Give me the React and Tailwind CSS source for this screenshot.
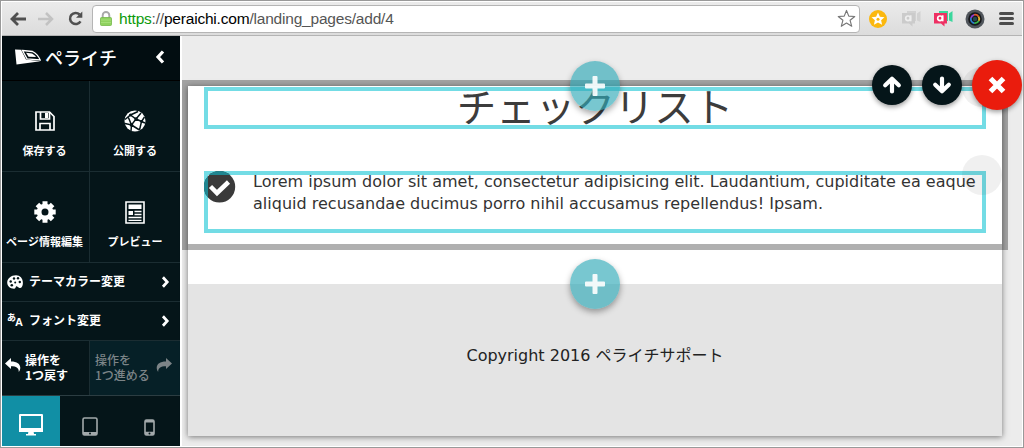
import clsx from 'clsx';

const line = { fill: 'none', stroke: 'currentColor', strokeLinecap: 'round', strokeLinejoin: 'round' };

function ArrowIcon({ className }) {
  return (
    <svg viewBox="0 0 20 20" className={className} {...line} strokeWidth="4.2">
      <path d="M10 16.500V4.500M3.200 10.200 10 3.800l6.800 6.400" />
    </svg>
  );
}

function ChevronIcon({ className }) {
  return (
    <svg viewBox="0 0 10 14" className={className} {...line} strokeWidth="3.200" strokeLinecap="butt" strokeLinejoin="miter">
      <path d="m2 1.500 5 5.500-5 5.500" />
    </svg>
  );
}

function UndoIcon({ className }) {
  return (
    <svg viewBox="0 0 16 16" className={className} fill="currentColor">
      <path d="M0 6.500 6 1v3.400c6 0 9.200 2.400 9.300 6.300 0 1.500-.6 3-1.500 4.300.2-4-2.300-5.800-7.800-5.800V12z" />
    </svg>
  );
}

function SaveIcon() {
  return (
    <svg viewBox="0 0 20 20" className="size-5" fill="none" stroke="currentColor" strokeWidth="1.700">
      <path d="M1 1h13.500l4.500 4.500V19H1z" />
      <path d="M5.500 1v7h9V1M5 19v-6.500h10V19" />
      <path d="M10 2h3v5h-3z" fill="currentColor" stroke="none" />
    </svg>
  );
}

function GlobeIcon() {
  return (
    <svg viewBox="0 0 22 22" className="size-[22px]">
      <circle cx="11" cy="11" r="10.500" fill="currentColor" />
      <g fill="none" stroke="#051519" strokeWidth="1.500">
        <path d="M1 9.500 6.500 5 14 1.500M6.500 5 12 9l9 4M12 9l5-6M12 9 7.500 15 1 13.500M7.500 15l8 5M7.500 15 7 21M4 6.500 7.500 15M15.500 20l2-8.500L20.500 7" />
      </g>
      <g fill="#051519">
        <circle cx="6.500" cy="5" r="1.600" />
        <circle cx="12" cy="9" r="1.700" />
        <circle cx="7.500" cy="15" r="1.800" />
        <circle cx="17.500" cy="11.500" r="1.300" />
      </g>
    </svg>
  );
}

function GearIcon() {
  return (
    <svg viewBox="0 0 22 22" className="size-[22px]">
      <g fill="none" stroke="currentColor">
        <circle cx="11" cy="11" r="5.900" strokeWidth="4.800" />
        <path d="M11 .3v5M11 16.700v5M.3 11h5M16.700 11h5M3.400 3.400l3.500 3.500M15.100 15.100l3.500 3.500M18.600 3.400l-3.500 3.500M6.900 15.100l-3.500 3.500" strokeWidth="5" />
      </g>
    </svg>
  );
}

function PreviewIcon() {
  return (
    <svg viewBox="0 0 20 23" className="h-[23px] w-5" fill="none" stroke="currentColor">
      <path d="M1 1h18v21H1z" strokeWidth="1.600" />
      <path d="M3.500 3.500h13V8h-13zM3.500 10H8v4H3.500z" fill="currentColor" stroke="none" />
      <path d="M9.500 10.500h7M9.500 13.500h7M3.500 16.500h13M3.500 19.300h13" strokeWidth="1.300" />
    </svg>
  );
}

function PaletteIcon() {
  return (
    <svg viewBox="0 0 16 14" className="h-3.5 w-4">
      <path
        fill="currentColor"
        d="M9 .3C4 .3.200 3.600.200 7.500c0 3.700 3 6.200 6.800 6.200 1.800 0 1.500-1.500 2-2.200.8-1 2 .8 3.500 1.500 2 .5 3.400-2 3.400-5C15.900 3.300 13 .3 9 .3z"
      />
      <g fill="#051519">
        <circle cx="7" cy="3.500" r="1.200" />
        <circle cx="11" cy="3.300" r="1.200" />
        <circle cx="3.700" cy="6.500" r="1.200" />
        <circle cx="4.800" cy="10.300" r="1.300" />
        <circle cx="12.800" cy="7" r="1.200" />
        <circle cx="8.200" cy="7.500" r="1" />
      </g>
    </svg>
  );
}

function LogoMark() {
  return (
    <svg viewBox="0 0 26 16" className="h-4 w-[26px]">
      <path d="M0 .5 6 .8l5 9.700 14.500 1.700L1.500 15.500z" fill="currentColor" />
      <path d="M7.500 1.500 17.500 2.500c3 1.500 6 4.500 7.700 8.500L12 9.800z" fill="none" stroke="currentColor" strokeWidth="1.300" />
      <path d="M11 3.800 17 4.500c1.500.8 2.800 1.800 4 3.500l-7.500-.3z" fill="currentColor" />
    </svg>
  );
}

function BrowserBar() {
  return (
    <header className="flex h-[34px] shrink-0 items-center border-b border-[#b4b4b4] bg-linear-to-b from-[#ebebeb] to-[#dcdcdc]">
      <div className="flex w-[90px] items-center pl-2">
        <svg viewBox="0 0 16 14" className="h-3.5 w-4 text-[#505050]" {...line} strokeWidth="2.800" strokeLinecap="butt" strokeLinejoin="miter">
          <path d="M16 7H2.500M8 1 2 7l6 6" />
        </svg>
        <svg viewBox="0 0 16 14" className="ml-3 h-3.5 w-4 text-[#c2c2c2]" {...line} strokeWidth="2.500" strokeLinecap="butt" strokeLinejoin="miter">
          <path d="M0 7h13.500M8 1l6 6-6 6" />
        </svg>
        <svg viewBox="0 0 15 15" className="ml-3.5 size-[15px] text-[#505050]">
          <path d="M12.500 10.300A5.600 5.600 0 1 1 11.600 3.500" fill="none" stroke="currentColor" strokeWidth="2.500" />
          <path d="M14.300.500v6.300H8z" fill="currentColor" />
        </svg>
      </div>
      <div className="flex h-7 w-[768px] items-center rounded-[4px] border border-[#b5b5b5] bg-white pr-[3px] pl-[7px]">
        <svg viewBox="0 0 12 15" className="h-[15px] w-3">
          <path d="M2.700 8V4.300a3.300 3.300 0 0 1 6.600 0V8" fill="none" stroke="#a9a9a9" strokeWidth="1.900" />
          <rect x=".5" y="6.500" width="11" height="8" rx="1" fill="#8fd25f" stroke="#75b84a" strokeWidth=".8" />
          <path d="M1 9h10M1 11.500h10" stroke="#a9e17f" strokeWidth=".8" />
        </svg>
        <span className="ml-[7px] text-[15.500px] leading-5 tracking-[-0.2px] text-[#555] [font-family:'Liberation_Sans',Arial,sans-serif]">
          <span className="text-[#0c9a0c]">https</span>://<span className="text-black">peraichi.com</span>/landing_pages/add/4
        </span>
        <svg viewBox="0 0 20 20" className="ml-auto size-[19px] text-[#777]" {...line} strokeWidth="1.200">
          <path d="m10 1.500 2.400 6 6.300.4-4.900 4 1.700 6.300-5.500-3.500-5.500 3.500 1.700-6.300-4.900-4 6.300-.4z" />
        </svg>
      </div>
      <div className="flex flex-1 items-center pl-[9px]">
        <svg viewBox="0 0 18 18" className="size-[18px]">
          <circle cx="9" cy="9" r="9" fill="#fbb80f" />
          <path d="m9 2.500 1.900 4.200 4.600.5-3.400 3.100 1 4.500L9 12.500l-4.100 2.300 1-4.500-3.400-3.100 4.600-.5z" fill="#fff" />
          <circle cx="9" cy="9.300" r="1.500" fill="#fbb80f" />
        </svg>
        <ChatBadge className="ml-3.5" tone="text-[#cbcbcb]" side="#d2d2d2" dim />
        <ChatBadge className="ml-3" tone="text-[#ee3063]" side="#3bd79d" />
        <svg viewBox="0 0 20 20" className="ml-3 size-5">
          <circle cx="10" cy="10" r="9.500" fill="#50555b" />
          <circle cx="10" cy="10" r="6.800" fill="#15171a" />
          <g fill="none" strokeWidth="1.800">
            <path d="M6 9a4.300 4.300 0 0 1 3-3.200" stroke="#8d3bd0" />
            <path d="M9 5.800a4.300 4.300 0 0 1 4.500 1.700" stroke="#e0592b" />
            <path d="M13.500 7.500a4.300 4.300 0 0 1 .2 4.400" stroke="#e6b52c" />
            <path d="M13.700 11.900a4.300 4.300 0 0 1-4.500 2.200" stroke="#37b34a" />
            <path d="M9.200 14.100A4.300 4.300 0 0 1 6 9" stroke="#2a7fd0" />
          </g>
          <circle cx="10" cy="10" r="2.200" fill="#25484c" />
        </svg>
        <div className="ml-[14px] flex flex-col gap-[2px]">
          <i className="h-[3px] w-[15px] rounded-full bg-[#4c4c4c]" />
          <i className="h-[3px] w-[15px] rounded-full bg-[#4c4c4c]" />
          <i className="h-[3px] w-[15px] rounded-full bg-[#4c4c4c]" />
        </div>
      </div>
    </header>
  );
}

function ChatBadge({ className, tone, side, dim }) {
  return (
    <svg viewBox="0 0 20 17" className={clsx('h-[17px] w-5', tone, className)}>
      <path d="M6 1h9v10H6zM16 3.500 19.500 1v11L16 10.500z" fill={side} />
      <path d="M1 3h13v10.500h-2.500V16.500L8 13.500H1z" fill="currentColor" />
      <g fill="none" stroke={dim ? '#eee' : '#fff'} strokeWidth="1.700">
        <circle cx="7" cy="8.300" r="2.300" />
        <path d="M9.700 5.300V11.300" />
      </g>
    </svg>
  );
}

const tiles = [
  { label: '保存する', icon: SaveIcon },
  { label: '公開する', icon: GlobeIcon },
  { label: 'ページ情報編集', icon: GearIcon },
  { label: 'プレビュー', icon: PreviewIcon },
];

function Sidebar() {
  return (
    <aside className="flex w-[178px] shrink-0 flex-col bg-[#051519] font-bold text-white">
      <div className="flex h-[45px] items-center border-b border-black bg-[#020d11] pr-[15px] pb-0.5 pl-[13px]">
        <LogoMark />
        <span className="ml-1 text-[18px] leading-6 font-medium">ペライチ</span>
        <ChevronIcon className="ml-auto h-3.5 w-2.5 rotate-180" />
      </div>

      <div className="grid grid-cols-[87px_91px] grid-rows-[91px_91px]">
        {tiles.map(({ label, icon: Icon }, i) => (
          <div
            key={label}
            className={clsx(
              'flex flex-col items-center border-b border-[#1b2d32] pt-[29px]',
              i % 2 === 1 ? 'border-l' : 'pr-0.5',
            )}
          >
            <div className="flex h-[22px] items-center">
              <Icon />
            </div>
            <span className="mt-[10px] text-[11px] leading-4 whitespace-nowrap">{label}</span>
          </div>
        ))}
      </div>

      <div className="flex h-[39px] items-center border-b border-[#1b2d32] pr-2.5 pb-px pl-[5px] text-[12px]">
        <PaletteIcon />
        <span className="ml-1.5 pb-px">テーマカラー変更</span>
        <ChevronIcon className="ml-auto h-3 w-[9px]" />
      </div>
      <div className="flex h-[39px] items-center border-b border-[#1b2d32] pr-2.5 pb-px pl-[5px] text-[12px]">
        <span className="flex w-4 leading-none">
          <span className="text-[9px]">あ</span>
          <span className="mt-1 -ml-px text-[11px] [font-family:'Liberation_Sans',sans-serif]">A</span>
        </span>
        <span className="ml-1.5 pb-px">フォント変更</span>
        <ChevronIcon className="ml-auto h-3 w-[9px]" />
      </div>

      <div className="flex h-[55px] border-b border-[#2c3d42] text-[12px] leading-[15px]">
        <div className="flex w-[87px] items-center pb-0.5 pl-[3px]">
          <UndoIcon className="mb-[5px] size-4" />
          <span className="ml-1">操作を<br />1つ戻す</span>
        </div>
        <div className="flex flex-1 items-center border-l border-[#1b2d32] bg-[#062027] pb-0.5 pl-[5px] font-medium text-[#7c8487]">
          <span>操作を<br />1つ進める</span>
          <UndoIcon className="mb-[5px] ml-1.5 size-4 -scale-x-100" />
        </div>
      </div>

      <div className="flex flex-1 text-[#a3a9ab]">
        <div className="flex w-[58px] justify-center bg-[#118fa5] pt-[18px] text-white">
          <svg viewBox="0 0 26 22" className="h-[22px] w-[26px]">
            <path d="M2 1h22v14.500H2z" fill="none" stroke="currentColor" strokeWidth="2" strokeLinejoin="round" />
            <path d="M1 14h24v4H1zM10.500 17h5l.5 3h2v1.500H8V20h2z" fill="currentColor" />
          </svg>
        </div>
        <div className="flex w-[59px] justify-center pt-[21px]">
          <svg viewBox="0 0 16 19" className="h-[19px] w-4">
            <rect x="1" y="1" width="14" height="17" rx="1.500" fill="none" stroke="currentColor" strokeWidth="1.600" />
            <path d="M1 15h14v3H1z" fill="currentColor" />
            <circle cx="8" cy="16.400" r="1" fill="#051519" />
          </svg>
        </div>
        <div className="flex flex-1 justify-center pt-[23px]">
          <svg viewBox="0 0 11 17" className="h-[17px] w-[11px]">
            <rect x="1" y="1" width="9" height="15" rx="1.500" fill="none" stroke="currentColor" strokeWidth="1.600" />
            <path d="M1 1h9v2.500H1zM1 12.800h9V16H1z" fill="currentColor" />
            <circle cx="5.500" cy="14.400" r="1" fill="#051519" />
          </svg>
        </div>
      </div>
    </aside>
  );
}

function AddButton({ className }) {
  return (
    <button
      type="button"
      className={clsx(
        'absolute left-[382px] z-10 flex size-[50px] items-center justify-center rounded-full bg-[#30a9b7]/65 shadow-[0_3px_6px_rgba(0,0,0,0.35)]',
        className,
      )}
    >
      <svg viewBox="0 0 20 20" className="size-5 text-white/90">
        <path d="M8.500 0h3a1 1 0 0 1 1 1v6.500H19a1 1 0 0 1 1 1v3a1 1 0 0 1-1 1h-6.500V19a1 1 0 0 1-1 1h-3a1 1 0 0 1-1-1v-6.500H1a1 1 0 0 1-1-1v-3a1 1 0 0 1 1-1h6.500V1a1 1 0 0 1 1-1z" fill="currentColor" />
      </svg>
    </button>
  );
}

function PageCanvas() {
  return (
    <div className="relative mt-[50px] ml-1.5 flex h-[350px] w-[814px] flex-col bg-white text-[#333] shadow-[0_1px_6px_rgba(0,0,0,0.5)] [font-family:'DejaVu_Sans','Noto_Sans_CJK_JP',sans-serif]">
      <section className="relative h-[158px] px-4 pt-px">
        <div className="pointer-events-none absolute -inset-1.5 border-6 border-black/31" />
        <h1 className="flex h-[42px] items-center justify-center border-4 border-[#73dce5] pb-1.5 text-[39.500px] leading-none font-normal text-[#3c3c3c] [font-family:'Noto_Sans_CJK_JP',sans-serif]">
          チェックリスト
        </h1>
        <div className="relative mt-[42px] flex h-[62px] border-4 border-[#73dce5]">
          <svg viewBox="0 0 32 32" className="-mt-1 -ml-1 size-8 shrink-0">
            <clipPath id="check-disc">
              <circle cx="15.500" cy="15.800" r="15.700" />
            </clipPath>
            <g clipPath="url(#check-disc)">
              <path d="M0 0h32v32H0z" fill="#3a3a3a" />
              <path d="M0 0h32v4H4v28H0z" fill="#1f8691" />
            </g>
            <path d="m6.500 15.500 6.500 6.500L24.500 11" fill="none" stroke="#fff" strokeWidth="4.500" />
          </svg>
          <p className="-mt-1 ml-[17px] text-[16px] leading-[22px] tracking-[0.012px] whitespace-nowrap">
            Lorem ipsum dolor sit amet, consectetur adipisicing elit. Laudantium, cupiditate ea eaque
            <br />
            aliquid recusandae ducimus porro nihil accusamus repellendus! Ipsam.
          </p>
        </div>
        <div className="absolute -top-[19px] left-[774px] size-10 rounded-full bg-black/6" />
        <div className="absolute top-[69px] left-[774px] size-10 rounded-full bg-black/6" />
      </section>

      <footer className="mt-10 flex-1 bg-[#e4e4e4] pt-[61px] text-center text-[16px] leading-[22px] text-[#222]">
        Copyright 2016 ペライチサポート
      </footer>

      <AddButton className="-top-[25px]" />
      <AddButton className="top-[173px]" />

      <div className="absolute -top-[26px] left-[684px] z-10 flex items-center gap-2.5 text-white">
        <button type="button" className="flex size-10 items-center justify-center rounded-full bg-[#051519] shadow-[0_2px_5px_rgba(0,0,0,0.4)]">
          <ArrowIcon className="size-5" />
        </button>
        <button type="button" className="flex size-10 items-center justify-center rounded-full bg-[#051519] shadow-[0_2px_5px_rgba(0,0,0,0.4)]">
          <ArrowIcon className="size-5 rotate-180" />
        </button>
        <button type="button" className="flex size-[50px] items-center justify-center rounded-full bg-[#ea1c0d] shadow-[0_2px_5px_rgba(0,0,0,0.4)]">
          <svg viewBox="0 0 18 18" className="size-[18px]" {...line} strokeWidth="5.200" strokeLinecap="butt">
            <path d="m2.500 2.500 13 13M15.500 2.500l-13 13" />
          </svg>
        </button>
      </div>
    </div>
  );
}

export default function App() {
  return (
    <div className="flex h-[448px] w-[1024px] flex-col overflow-hidden border border-[#999] bg-white p-px [font-family:'Noto_Sans_CJK_JP',sans-serif]">
      <BrowserBar />
      <div className="flex min-h-0 flex-1">
        <Sidebar />
        <main className="ml-0.5 flex-1 bg-[#ececec]">
          <div className="flow-root">
            <PageCanvas />
          </div>
        </main>
      </div>
    </div>
  );
}
